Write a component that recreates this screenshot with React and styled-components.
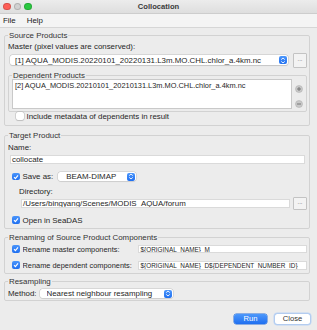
import React from "react";
import styled, { createGlobalStyle } from "styled-components";

const GlobalStyle = createGlobalStyle`
  html, body {
    margin: 0;
    padding: 0;
    background: #ececec;
  }
  * {
    box-sizing: border-box;
  }
`;

const FONT = `"Liberation Sans", Arial, sans-serif`;

// window chrome

const Window = styled.div`
  width: 317px;
  height: 330px;
  background: #ececec;
  overflow: hidden;
  font-family: ${FONT};
  font-size: 7.9px;
  color: #262626;
  display: flex;
  flex-direction: column;
`;

const TitleBar = styled.div`
  height: 14px;
  flex: none;
  display: flex;
  align-items: center;
  position: relative;
  background: linear-gradient(#ececec, #dedede);
  border-bottom: 1px solid #cdcdcd;
`;

const Lights = styled.div`
  display: flex;
  gap: 3px;
  padding-left: 3px;
`;

const Light = styled.span`
  width: 7.5px;
  height: 7.5px;
  border-radius: 50%;
  background: ${({ color }) => color};
  border: 0.5px solid rgba(0, 0, 0, 0.15);
`;

const Title = styled.div`
  position: absolute;
  left: 0;
  right: 0;
  text-align: center;
  font-weight: bold;
  font-size: 7.6px;
  color: #3a3a3a;
`;

const MenuBar = styled.div`
  height: 14px;
  flex: none;
  display: flex;
  align-items: center;
  gap: 11px;
  padding-left: 3px;
  background: #f4f4f4;
  border-bottom: 1px solid #d6d6d6;
  font-size: 7.9px;
  color: #222;
`;

const Body = styled.div`
  padding: 2.5px 7px 0 4px;
  display: flex;
  flex-direction: column;
  flex: 1;
`;

// groups

const Group = styled.fieldset`
  margin: ${({ $top }) => $top || 0}px 0 0 ${({ $left }) => $left || 0}px;
  padding: 0 2px ${({ $bottom }) => $bottom || 0}px 2px;
  border: 1px solid #d2d2d2;
  border-radius: 2px;
  min-width: 0;
`;

const Legend = styled.legend`
  padding: 0 1px;
  margin-left: 1px;
  line-height: ${({ $lh }) => $lh || 9}px;
  font-size: 7.9px;
  color: #333;
`;

const Label = styled.div`
  line-height: 9px;
  margin: ${({ $top }) => $top || 0}px 0 0 ${({ $left }) => $left || 0}px;
  white-space: nowrap;
`;

const Row = styled.div`
  display: flex;
  align-items: center;
  height: ${({ $h }) => $h || 9}px;
  margin: ${({ $top }) => $top || 0}px 0 0 ${({ $left }) => $left || 0}px;
  white-space: nowrap;
`;

const RowLabel = styled.span`
  width: ${({ $w }) => $w}px;
  flex: none;
  font-size: ${({ $fs }) => $fs || 7.9}px;
  overflow: hidden;
`;

// controls

const Combo = styled.div`
  width: ${({ $w }) => $w}px;
  height: ${({ $h }) => $h || 10}px;
  margin-left: ${({ $left }) => $left || 0}px;
  background: #fff;
  border-radius: 2.5px;
  box-shadow: 0 0 0 0.5px #c4c4c4, 0 0.5px 1px rgba(0, 0, 0, 0.15);
  display: flex;
  align-items: center;
  padding-left: ${({ $pad }) => $pad || 5}px;
  padding-right: 1px;
  white-space: nowrap;
  overflow: hidden;
  flex: none;
`;

const ComboText = styled.span`
  flex: 1;
  overflow: hidden;
`;

const Stepper = styled.span`
  width: 8px;
  height: 8px;
  border-radius: 2px;
  background: linear-gradient(#4d97fb, #1f6ff0);
  display: flex;
  align-items: center;
  justify-content: center;
  flex: none;
`;

const DotsButton = styled.div`
  width: 14px;
  height: ${({ $h }) => $h || 14}px;
  margin-left: ${({ $left }) => $left || 0}px;
  border: 1px solid #c3c3c3;
  border-radius: 1px;
  background: #f3f3f3;
  display: flex;
  align-items: center;
  justify-content: center;
  font-size: 6px;
  color: #555;
  padding-bottom: 2px;
  flex: none;
`;

const Field = styled.div`
  width: ${({ $w }) => ($w ? `${$w}px` : "auto")};
  flex: ${({ $w }) => ($w ? "none" : "1")};
  height: ${({ $h }) => $h || 9}px;
  margin-left: ${({ $left }) => $left || 0}px;
  background: #fff;
  border: 1px solid #dadada;
  display: flex;
  align-items: center;
  padding-left: ${({ $pad }) => $pad || 1}px;
  white-space: nowrap;
  overflow: hidden;
  font-size: ${({ $fs }) => $fs || 7.9}px;
`;

const ListBox = styled.div`
  width: 280px;
  height: 30px;
  margin-left: 1px;
  background: #fff;
  border: 1px solid #c9c9c9;
  padding: 2px 0 0 2px;
  font-size: 7.4px;
  line-height: 8px;
  white-space: nowrap;
  overflow: hidden;
  flex: none;
`;

const ListTools = styled.div`
  display: flex;
  flex-direction: column;
  gap: 6.5px;
  margin-left: 3px;
  padding-top: 6px;
`;

const Check = styled.span`
  width: 7.5px;
  height: 7.5px;
  border-radius: 2px;
  flex: none;
  margin-left: ${({ $left }) => $left || 0}px;
  margin-right: ${({ $gap }) => $gap || 3}px;
  display: flex;
  align-items: center;
  justify-content: center;
  ${({ $on }) =>
    $on
      ? `background: linear-gradient(#4a95fb, #1f6ff0);`
      : `background: #fff; box-shadow: 0 0 0 0.5px #b8b8b8, 0 0.5px 1px rgba(0,0,0,0.15);`}
`;

const Footer = styled.div`
  display: flex;
  justify-content: flex-end;
  gap: 8px;
  margin-top: 13px;
`;

const Button = styled.div`
  width: ${({ $w }) => $w}px;
  height: 10px;
  border-radius: 2.5px;
  display: flex;
  align-items: center;
  justify-content: center;
  font-size: 7.6px;
  ${({ $primary }) =>
    $primary
      ? `background: linear-gradient(#4d98fb, #1f6ff0); color: #fff; box-shadow: 0 0 0 0.5px #2a6fd8;`
      : `background: #fff; color: #333; box-shadow: 0 0 0 0.5px #a9c6ee, 0 0 0 1.5px #bcd3f3;`}
`;

// icons

const StepperIcon = () => (
  <Stepper>
    <svg width="6" height="7" viewBox="0 0 6 7">
      <path d="M1.2 2.6 L3 1 L4.8 2.6" fill="none" stroke="#fff" strokeWidth="0.9" />
      <path d="M1.2 4.4 L3 6 L4.8 4.4" fill="none" stroke="#fff" strokeWidth="0.9" />
    </svg>
  </Stepper>
);

const CheckMark = () => (
  <svg width="6" height="6" viewBox="0 0 6 6">
    <path d="M1 3.1 L2.4 4.6 L5 1.3" fill="none" stroke="#fff" strokeWidth="1.1" />
  </svg>
);

const RoundIcon = ({ minus }) => (
  <svg width="8" height="8" viewBox="0 0 8 8">
    <circle cx="4" cy="4" r="3.5" fill="#c9c9c9" />
    <circle cx="4" cy="4" r="3.5" fill="none" stroke="#ababab" strokeWidth="0.5" />
    <path d="M2 4 H6" stroke="#6e6e6e" strokeWidth="0.9" />
    {!minus && <path d="M4 2 V6" stroke="#6e6e6e" strokeWidth="0.9" />}
  </svg>
);

const CheckBox = ({ on, left, gap }) => (
  <Check $on={on} $left={left} $gap={gap}>
    {on && <CheckMark />}
  </Check>
);

export default function App() {
  return (
    <Window>
      <GlobalStyle />
      <TitleBar>
        <Lights>
          <Light color="#fe5f57" />
          <Light color="#d1d1d1" />
          <Light color="#2ac840" />
        </Lights>
        <Title>Collocation</Title>
      </TitleBar>
      <MenuBar>
        <span>File</span>
        <span>Help</span>
      </MenuBar>

      <Body>
        <Group $bottom={4}>
          <Legend>Source Products</Legend>
          <Label $top={2} $left={1}>Master (pixel values are conserved):</Label>
          <Row $h={15} $top={2}>
            <Combo $w={278} $left={3} $pad={5}>
              <ComboText>[1] AQUA_MODIS.20220101_20220131.L3m.MO.CHL.chlor_a.4km.nc</ComboText>
              <StepperIcon />
            </Combo>
            <DotsButton $left={5} $h={15}>...</DotsButton>
          </Row>

          <Group $top={4} $left={1} $bottom={2}>
            <Legend $lh={7}>Dependent Products</Legend>
            <Row $h={30}>
              <ListBox>[2] AQUA_MODIS.20210101_20210131.L3m.MO.CHL.chlor_a.4km.nc</ListBox>
              <ListTools>
                <RoundIcon />
                <RoundIcon minus />
              </ListTools>
            </Row>
          </Group>

          <Row>
            <CheckBox left={9} />
            <span>Include metadata of dependents in result</span>
          </Row>
        </Group>

        <Group $top={5} $bottom={3}>
          <Legend>Target Product</Legend>
          <Label $top={3} $left={1}>Name:</Label>
          <Row $top={3.5}>
            <Field $w={295} $left={3} $pad={1}>collocate</Field>
          </Row>
          <Row $top={7.5} $h={10}>
            <CheckBox on left={5} />
            <span>Save as:</span>
            <Combo $w={78} $h={9.5} $left={5} $pad={8}>
              <ComboText>BEAM-DIMAP</ComboText>
              <StepperIcon />
            </Combo>
          </Row>
          <Label $top={5} $left={12}>Directory:</Label>
          <Row $h={14} $top={0.5}>
            <Field $w={269} $left={14} $pad={1}>/Users/bingyang/Scenes/MODIS_AQUA/forum</Field>
            <DotsButton $left={3} $h={13}>...</DotsButton>
          </Row>
          <Row $top={5.5}>
            <CheckBox on left={5} />
            <span>Open in SeaDAS</span>
          </Row>
        </Group>

        <Group $top={4} $bottom={3}>
          <Legend>Renaming of Source Product Components</Legend>
          <Row $top={3}>
            <CheckBox on left={5} />
            <RowLabel $w={115} $fs={7.4}>Rename master components:</RowLabel>
            <Field $h={8.5} $pad={2} $fs={6.4}>
              ${"{"}ORIGINAL_NAME{"}"}_M
            </Field>
          </Row>
          <Row $top={7}>
            <CheckBox on left={5} />
            <RowLabel $w={115} $fs={7.4}>Rename dependent components:</RowLabel>
            <Field $h={9} $pad={2} $fs={6.4}>
              ${"{"}ORIGINAL_NAME{"}"}_D${"{"}DEPENDENT_NUMBER_ID{"}"}
            </Field>
          </Row>
        </Group>

        <Group $top={3.5} $bottom={1.5}>
          <Legend>Resampling</Legend>
          <Row $top={3}>
            <span style={{ marginLeft: 1 }}>Method:</span>
            <Combo $w={133} $h={9} $left={3} $pad={7}>
              <ComboText>Nearest neighbour resampling</ComboText>
              <StepperIcon />
            </Combo>
          </Row>
        </Group>

        <Footer>
          <Button $primary $w={33}>Run</Button>
          <Button $w={35}>Close</Button>
        </Footer>
      </Body>
    </Window>
  );
}
